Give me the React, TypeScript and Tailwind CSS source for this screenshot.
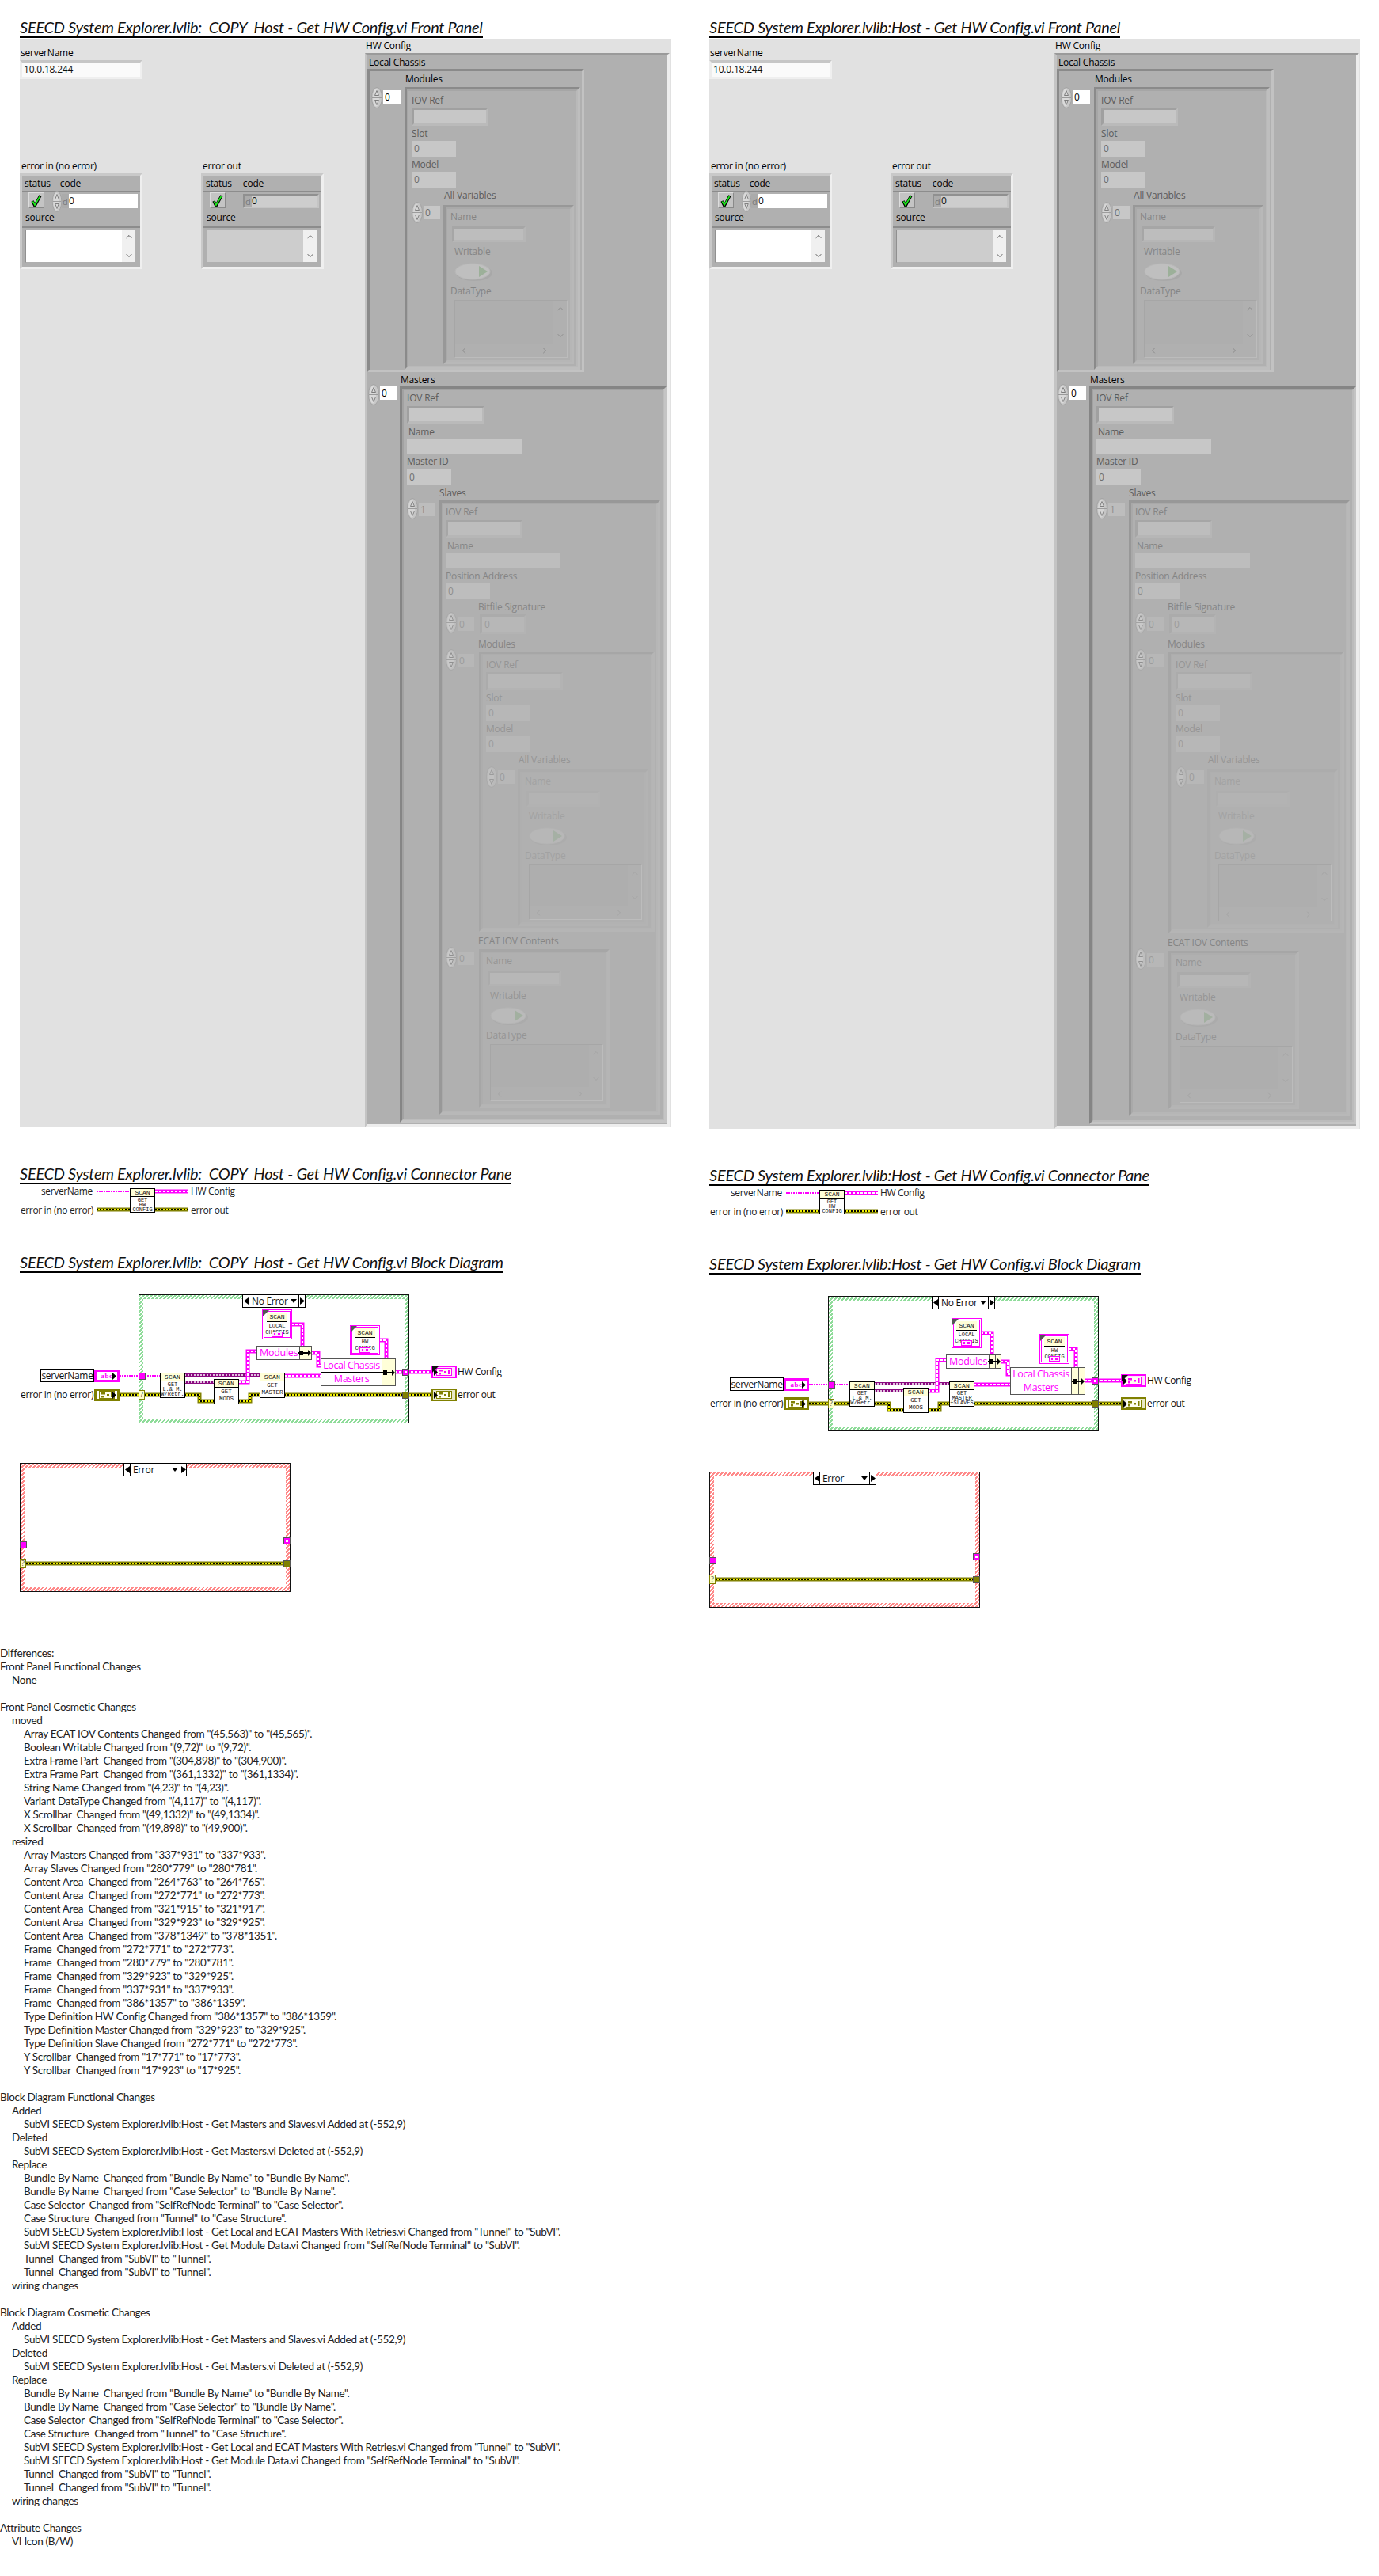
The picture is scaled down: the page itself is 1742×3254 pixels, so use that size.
import React from "react";
import { ChevronUp, ChevronDown, ChevronLeft, ChevronRight } from "lucide-react";

const TEXTC = ["text-black", "text-[#5c5c5c]", "text-[#858585]", "text-[#959595]", "text-[#a2a2a2]"];
const FIELD = ["bg-white", "bg-[#c7c7c7]", "bg-[#bdbdbd]", "bg-[#b7b7b7]", "bg-[#b3b3b3]"];
const VAL = ["text-black", "text-[#6e6e6e]", "text-[#8e8e8e]", "text-[#9c9c9c]", "text-[#a8a8a8]"];
const REC = [
  "border-2 border-t-[#8e8e8e] border-l-[#8e8e8e] border-r-[#c2c2c2] border-b-[#c2c2c2]",
  "border-[3px] border-t-[#a0a0a0] border-l-[#a0a0a0] border-r-[#bababa] border-b-[#bababa]",
  "border-[3px] border-t-[#a6a6a6] border-l-[#a6a6a6] border-r-[#b6b6b6] border-b-[#b6b6b6]",
  "border-[3px] border-t-[#ababab] border-l-[#ababab] border-r-[#b3b3b3] border-b-[#b3b3b3]",
  "border-[3px] border-t-[#aeaeae] border-l-[#aeaeae] border-r-[#b2b2b2] border-b-[#b2b2b2]",
];
const FRAME = [
  "border-[3px] border-t-[#858585] border-l-[#858585] border-r-[#c4c4c4] border-b-[#c4c4c4]",
  "border-[3px] border-t-[#8a8a8a] border-l-[#8a8a8a] border-r-[#bebebe] border-b-[#bebebe]",
  "border-[3px] border-t-[#989898] border-l-[#989898] border-r-[#b8b8b8] border-b-[#b8b8b8]",
  "border-[3px] border-t-[#a6a6a6] border-l-[#a6a6a6] border-r-[#b5b5b5] border-b-[#b5b5b5]",
  "border-[3px] border-t-[#acacac] border-l-[#acacac] border-r-[#b3b3b3] border-b-[#b3b3b3]",
];
const INNER = [
  "border-2 border-t-[#a2a2a2] border-l-[#a2a2a2] border-r-[#bcbcbc] border-b-[#bcbcbc]",
  "border-2 border-t-[#a6a6a6] border-l-[#a6a6a6] border-r-[#b9b9b9] border-b-[#b9b9b9]",
  "border-2 border-t-[#a9a9a9] border-l-[#a9a9a9] border-r-[#b6b6b6] border-b-[#b6b6b6]",
  "border-2 border-t-[#adadad] border-l-[#adadad] border-r-[#b4b4b4] border-b-[#b4b4b4]",
  "border-2 border-t-[#afafaf] border-l-[#afafaf] border-r-[#b2b2b2] border-b-[#b2b2b2]",
];
const OPA = ["opacity-100", "opacity-90", "opacity-60", "opacity-40", "opacity-30"];

function Lbl({ t, lvl = 0, c = "" }: { t: string; lvl?: number; c?: string }) {
  return <div className={`h-[16px] leading-[16px] text-[12px] tracking-[-0.2px] whitespace-pre ${TEXTC[lvl]} ${c}`}>{t}</div>;
}

function Field({ lvl, c, v, rec }: { lvl: number; c: string; v?: string; rec?: boolean }) {
  return (
    <div className={`flex items-center pl-[3px] text-[12px] leading-none ${rec ? REC[lvl] : ""} ${FIELD[lvl]} ${VAL[lvl]} ${c}`}>{v}</div>
  );
}

function Spinner({ lvl, c = "" }: { lvl: number; c?: string }) {
  return (
    <svg width="14" height="27" viewBox="0 0 14 27" className={`shrink-0 ${OPA[lvl]} ${c}`}>
      <ellipse cx="7" cy="13.5" rx="6.5" ry="13" fill="#c8c8c8" stroke="#a2a2a2" />
      <ellipse cx="6" cy="13.5" rx="4" ry="11" fill="#dadada" />
      <path d="M1 13.5H13" stroke="#9a9a9a" />
      <path d="M7 4.5L4.5 10.5H9.5Z M7 22.5L4.5 16.5H9.5Z" fill="none" stroke="#7c7c7c" />
    </svg>
  );
}

function Idx({ lvl, v = "0", c = "" }: { lvl: number; v?: string; c?: string }) {
  return <div className={`w-[21px] h-[17px] pl-[2px] flex items-center text-[12px] leading-none ${FIELD[lvl]} ${VAL[lvl]} ${c}`}>{v}</div>;
}

function Frame({ lvl, c, children }: { lvl: number; c: string; children: React.ReactNode }) {
  return (
    <div className={`shrink-0 ${FRAME[lvl]} ${c}`}>
      <div className={`h-full ${INNER[lvl]}`}>{children}</div>
    </div>
  );
}

function Oval({ lvl }: { lvl: number }) {
  return (
    <svg width="50" height="24" viewBox="0 0 50 24" className={`block ${OPA[lvl]}`}>
      <ellipse cx="25" cy="13" rx="23" ry="10" fill="#a4a4a4" />
      <ellipse cx="23" cy="11" rx="22" ry="10" fill="#c9c9c9" stroke="#bdbdbd" />
      <path d="M31 4L42 11L31 18Z" fill="#8fb08a" />
    </svg>
  );
}

function TextBox({ lvl, c, tone }: { lvl: number; c: string; tone: string }) {
  const ic = lvl < 3 ? "text-[#8c8c8c]" : "text-[#a4a4a4]";
  return (
    <div className={`${c} border border-t-[#a6a6a6] border-l-[#a6a6a6] border-r-[#bcbcbc] border-b-[#bcbcbc] flex flex-col`}>
      <div className="flex-1 flex min-h-0">
        <div className={`flex-1 ${tone}`} />
        <div className="w-[17px] flex flex-col justify-between items-center py-[4px]">
          <ChevronUp size={12} className={ic} />
          <ChevronDown size={12} className={ic} />
        </div>
      </div>
      <div className="h-[17px] flex justify-between items-center px-[5px] mr-[17px]">
        <ChevronLeft size={12} className={ic} />
        <ChevronRight size={12} className={ic} />
      </div>
    </div>
  );
}

function VarEl({ lvl, c, tb }: { lvl: number; c: string; tb: string }) {
  return (
    <Frame lvl={lvl} c={`w-[165px] ${c}`}>
      <div className="pl-[4px] pt-[2px]">
        <Lbl t="Name" lvl={lvl} />
        <Field lvl={lvl} rec c="ml-[2px] mt-[4px] w-[93px] h-[20px]" />
        <Lbl t="Writable" lvl={lvl} c="ml-[5px] mt-[4px]" />
        <div className="ml-[5px] mt-[6px]">
          <Oval lvl={lvl} />
        </div>
        <Lbl t="DataType" lvl={lvl} c="mt-[4px]" />
        <TextBox lvl={lvl} tone="bg-[#aeaeae]" c={`ml-[5px] mt-[3px] w-[143px] ${tb}`} />
      </div>
    </Frame>
  );
}

function ModuleEl({ lvl, c, varC, tb }: { lvl: number; c: string; varC: string; tb: string }) {
  return (
    <Frame lvl={lvl} c={`w-[222px] ${c}`}>
      <div className="pl-[4px] pt-[4px]">
        <Lbl t="IOV Ref" lvl={lvl} />
        <Field lvl={lvl} rec c="mt-[1px] w-[97px] h-[23px]" />
        <Lbl t="Slot" lvl={lvl} c="mt-[2px]" />
        <Field lvl={lvl} v="0" c="mt-[1px] w-[56px] h-[20px]" />
        <Lbl t="Model" lvl={lvl} c="mt-[2px]" />
        <Field lvl={lvl} v="0" c="mt-[1px] w-[56px] h-[20px]" />
        <Lbl t="All Variables" lvl={lvl} c="mt-[2px] ml-[41px]" />
        <div className="flex">
          <div className="w-[40px] flex gap-[1px] items-start">
            <Spinner lvl={lvl} />
            <Idx lvl={lvl} c="mt-[5px]" />
          </div>
          <div className="mt-[4px]">
            <VarEl lvl={Math.min(lvl + 1, 4)} c={varC} tb={tb} />
          </div>
        </div>
      </div>
    </Frame>
  );
}

function ErrorCluster({ label, ctl }: { label: string; ctl: boolean }) {
  return (
    <div className="w-[155px]">
      <Lbl t={label} c="ml-[2px]" />
      <div className="mt-[1px] h-[121px] border-[3px] border-t-[#c9c9c9] border-l-[#c9c9c9] border-r-[#efefef] border-b-[#efefef] bg-[#b0b0b0]">
        <div className="h-[19px] flex pl-[3px] pt-[2px]">
          <Lbl t="status" />
          <Lbl t={"code"} c={ctl ? "ml-[12px]" : "ml-[14px]"} />
        </div>
        <div className="h-[26px] border-t-2 border-[#8c8c8c] flex items-start pl-[8px]">
          <div className="w-[20px] h-[20px] bg-[#c4c4c4] border border-[#dcdcdc] border-r-[#8a8a8a] border-b-[#8a8a8a] flex items-center justify-center">
            <svg width="14" height="17" viewBox="0 0 14 17">
              <path d="M2 9L5 15L12 2" fill="none" stroke="#000" strokeWidth="3.6" />
              <path d="M2.4 9.5L5 14L11.5 3" fill="none" stroke="#19e819" strokeWidth="1.8" />
            </svg>
          </div>
          {ctl ? <Spinner lvl={0} c="ml-[9px] -mt-[2px] scale-x-90" /> : <div className="w-[14px] ml-[9px]" />}
          <div className={`${ctl ? "ml-[-1px] w-[96px]" : "ml-[-1px] w-[96px] border-2 border-t-[#909090] border-l-[#909090] border-r-[#c4c4c4] border-b-[#c4c4c4]"} mt-[2px] h-[18px] flex items-center bg-[#ababab]`}>
            <div className="w-[9px] text-[11px] text-[#7a7a7a] pl-[1px] leading-none">d</div>
            <div className={`flex-1 h-full flex items-center text-[12px] leading-none ${ctl ? "bg-white" : "bg-[#cdcdcd]"}`}>0</div>
          </div>
        </div>
        <div className="h-[19px] pl-[4px]">
          <Lbl t="source" />
        </div>
        <div className="border-t-2 border-[#8c8c8c] pl-[4px] pt-[2px]">
          <div className="w-[140px] h-[42px] flex border border-t-[#909090] border-l-[#909090] border-transparent">
            <div className={`flex-1 ${ctl ? "bg-white" : "bg-[#cdcdcd]"}`} />
            <div className="w-[17px] flex flex-col justify-between items-center py-[2px] bg-[#f0f0f0]">
              <ChevronUp size={12} className="text-[#505050]" />
              <ChevronDown size={12} className="text-[#505050]" />
            </div>
          </div>
        </div>
      </div>
    </div>
  );
}

function FrontPanel({ extra }: { extra: boolean }) {
  return (
    <div className={`mt-[1px] w-[822px] bg-[#e1e1e1] flex ${extra ? "h-[1377px]" : "h-[1375px]"}`}>
      <div className="w-[436px] shrink-0">
        <Lbl t="serverName" c="mt-[10px] ml-[1px]" />
        <div className="mt-[1px] w-[155px] h-[24px] border-[3px] border-t-[#c6c6c6] border-l-[#ededed] border-r-[#efefef] border-b-[#efefef] bg-[#fafafa] flex items-center pl-[2px] text-[12px] tracking-[-0.2px]">
          10.0.18.244
        </div>
        <div className="mt-[102px] flex gap-[74px]">
          <ErrorCluster label="error in (no error)" ctl />
          <ErrorCluster label="error out" ctl={false} />
        </div>
      </div>
      <div className="flex-1 flex flex-col">
        <div className="h-[18px]">
          <Lbl t="HW Config" c="ml-[1px] mt-[1px]" />
        </div>
        <div className="flex-1 w-[385px] bg-[#b0b0b0] border-[3px] border-r-[4px] border-b-[4px] border-t-[#9a9a9a] border-l-[#c4c4c4] border-r-[#ededed] border-b-[#ededed]">
          <Lbl t="Local Chassis" c="ml-[2px] mt-[1px]" />
          <div className="h-[383px] w-[274px] border-[3px] border-t-[#8a8a8a] border-l-[#8a8a8a] border-r-[#c2c2c2] border-b-[#c2c2c2]">
            <Lbl t="Modules" c="ml-[45px] mt-[2px]" />
            <div className="flex mt-[2px]">
              <div className="w-[44px] flex gap-[1px] pl-[2px] items-start">
                <Spinner lvl={0} />
                <Idx lvl={0} c="mt-[4px] w-[22px]" />
              </div>
              <ModuleEl lvl={1} c="h-[357px]" varC="h-[201px]" tb="h-[73px]" />
            </div>
          </div>
          <Lbl t="Masters" c="ml-[42px] mt-[2px]" />
          <div className="flex">
            <div className="w-[41px] flex gap-[1px] items-start -mt-[3px] pl-[1px]">
              <Spinner lvl={0} />
              <Idx lvl={0} c="mt-[3px]" />
            </div>
            <Frame lvl={0} c={`w-[337px] ${extra ? "h-[932px]" : "h-[930px]"}`}>
              <div className="pl-[4px] pt-[2px]">
                <Lbl t="IOV Ref" lvl={1} />
                <Field lvl={1} rec c="mt-[2px] w-[98px] h-[22px]" />
                <Lbl t="Name" lvl={1} c="mt-[3px] ml-[2px]" />
                <Field lvl={1} c="mt-[1px] w-[145px] h-[19px]" />
                <Lbl t="Master ID" lvl={1} c="mt-[1px]" />
                <Field lvl={1} v="0" c="mt-[2px] w-[56px] h-[20px]" />
                <Lbl t="Slaves" lvl={1} c="mt-[2px] ml-[41px]" />
                <div className="flex -mt-[2px]">
                  <div className="w-[41px] flex gap-[1px] items-start">
                    <Spinner lvl={1} />
                    <Idx lvl={2} v="1" c="mt-[6px]" />
                  </div>
                  <div className="mt-[3px]">
                    <Frame lvl={2} c={`w-[279px] ${extra ? "h-[778px]" : "h-[776px]"}`}>
                      <div className="pl-[3px] pt-[2px]">
                        <Lbl t="IOV Ref" lvl={2} />
                        <Field lvl={2} rec c="mt-[2px] w-[97px] h-[22px]" />
                        <Lbl t="Name" lvl={2} c="mt-[3px] ml-[2px]" />
                        <Field lvl={2} c="mt-[1px] w-[145px] h-[19px]" />
                        <Lbl t="Position Address" lvl={2} c="mt-[2px]" />
                        <Field lvl={2} v="0" c="mt-[1px] w-[56px] h-[20px]" />
                        <Lbl t="Bitfile Signature" lvl={2} c="mt-[2px] ml-[41px]" />
                        <div className="flex -mt-[2px]">
                          <div className="w-[43px] flex gap-[1px] items-start">
                            <Spinner lvl={2} />
                            <Idx lvl={3} c="mt-[7px]" />
                          </div>
                          <Field lvl={3} rec v="0" c="mt-[3px] w-[59px] h-[25px]" />
                        </div>
                        <Lbl t="Modules" lvl={2} c="mt-[5px] ml-[41px]" />
                        <div className="flex -mt-[2px]">
                          <div className="w-[42px] flex gap-[1px] items-start">
                            <Spinner lvl={2} />
                            <Idx lvl={3} c="mt-[6px]" />
                          </div>
                          <div className="mt-[3px]">
                            <ModuleEl lvl={3} c={extra ? "h-[356px]" : "h-[354px]"} varC={extra ? "h-[200px]" : "h-[198px]"} tb={extra ? "h-[72px]" : "h-[70px]"} />
                          </div>
                        </div>
                        <Lbl t="ECAT IOV Contents" lvl={2} c="mt-[4px] ml-[41px]" />
                        <div className="flex -mt-[1px]">
                          <div className="w-[42px] flex gap-[1px] items-start">
                            <Spinner lvl={2} />
                            <Idx lvl={3} c="mt-[6px]" />
                          </div>
                          <div className="mt-[3px]">
                            <VarEl lvl={3} c="h-[200px]" tb="h-[72px]" />
                          </div>
                        </div>
                      </div>
                    </Frame>
                  </div>
                </div>
              </div>
            </Frame>
          </div>
        </div>
      </div>
    </div>
  );
}

function Title({ t, c }: { t: string; c: string }) {
  return (
    <div className={`w-fit h-[26px] border-b-[2px] border-black leading-[25px] text-[20px] tracking-[-0.27px] italic font-['Lato',sans-serif] whitespace-pre text-[#111] ${c}`}>{t}</div>
  );
}

const WIRE = {
  pink: (d: string) => (
    <g key={d}>
      <path d={d} fill="none" stroke="#ff00ff" strokeWidth="5" />
      <path d={d} fill="none" stroke="#ffffff" strokeWidth="2" strokeDasharray="3 2" />
    </g>
  ),
  str: (d: string) => <path key={d} d={d} fill="none" stroke="#ff00ff" strokeWidth="2" strokeDasharray="2 1" />,
  purple: (d: string) => (
    <g key={d}>
      <path d={d} fill="none" stroke="#8a0a80" strokeWidth="4" />
      <path d={d} fill="none" stroke="#ffffff" strokeWidth="1.6" strokeDasharray="2 2" />
    </g>
  ),
  olive: (d: string) => (
    <g key={d}>
      <path d={d} fill="none" stroke="#808000" strokeWidth="5" />
      <path d={d} fill="none" stroke="#f2f200" strokeWidth="2" />
      <path d={d} fill="none" stroke="#000000" strokeWidth="2" strokeDasharray="2 2" />
    </g>
  ),
};

function ClusterGlyph({ color }: { color: string }) {
  return (
    <svg width="20" height="10" viewBox="0 0 20 10">
      <rect x="0.5" y="0.5" width="19" height="9" fill="#fffff0" stroke={color} />
      <rect x="3" y="2" width="5" height="2.5" fill={color} />
      <rect x="3" y="6" width="3" height="2.5" fill={color} />
      <rect x="10" y="4" width="3" height="2.5" fill={color} />
      <rect x="15" y="2" width="2.5" height="6" fill={color} />
    </svg>
  );
}

function Term({ x, y, kind, out }: { x: number; y: number; kind: "abc" | "pink" | "olive"; out?: boolean }) {
  const pink = kind !== "olive";
  const border = out
    ? pink ? "border-2 border-[#ff00ff]" : "border-2 border-[#808000]"
    : pink ? "border-[3px] border-[#ff00ff]" : "border-[3px] border-[#808000]";
  return (
    <div style={{ left: x, top: y }} className={`absolute w-[32px] h-[16px] flex items-center justify-center ${border} ${out ? (pink ? "bg-[#ffe0ff]" : "bg-[#e8e8c8]") : "bg-white"}`}>
      {kind === "abc" ? (
        <span className="text-[9px] font-bold font-['Liberation_Serif',serif] text-[#ff00ff] leading-none tracking-[0.5px]">abc</span>
      ) : (
        <ClusterGlyph color={pink ? "#ff00ff" : "#808000"} />
      )}
      <svg width="5" height="9" viewBox="0 0 5 9" className={`absolute ${out ? "left-[1px]" : "right-[1px]"}`}>
        <path d="M0 0L5 4.5L0 9Z" fill="#000" />
      </svg>
      {out && pink && (
        <svg width="8" height="8" viewBox="0 0 8 8" className="absolute -left-[1px] -top-[1px]">
          <path d="M0 0H8L0 8Z" fill="#111" />
        </svg>
      )}
    </div>
  );
}

function SubVI({ x, y, w = 32, h = 32, lines, tall }: { x: number; y: number; w?: number; h?: number; lines: string[]; tall?: boolean }) {
  return (
    <div style={{ left: x, top: y, width: w, height: h }} className="absolute bg-white border border-black font-['Liberation_Mono',monospace] text-[#111]">
      <div className="h-[10px] bg-[#ffffd8] border-b border-black text-[8px] leading-[9px] text-center tracking-[0.3px]">SCAN</div>
      <div className={`text-center flex flex-col ${tall ? "text-[7.5px] leading-[9px] pt-[1px]" : "text-[7px] leading-[6px] pt-[1px]"}`}>
        {lines.map((l, i) => (
          <div key={i} className="whitespace-pre">{l}</div>
        ))}
      </div>
    </div>
  );
}

function Const({ x, y, lines }: { x: number; y: number; lines: string[] }) {
  return (
    <div style={{ left: x, top: y }} className="absolute w-[38px] h-[38px] bg-white border border-[#ff00ff] p-[1px]">
      <div className="h-full border border-[#ff00ff] bg-white font-['Liberation_Mono',monospace] text-[#111] relative px-[2px]">
        <div className="h-[12px] mt-[1px] mx-[1px] bg-[#ffffd8] border-b border-black text-[8px] leading-[11px] text-center">SCAN</div>
        <div className="text-[7px] leading-[8px] text-center whitespace-pre pt-[1px] -mx-[2px]">{lines.join("\n")}</div>
        <div className="absolute left-[9px] bottom-[0px]">
          <svg width="14" height="7" viewBox="0 0 14 7">
            <rect x="0.5" y="0.5" width="13" height="6" fill="#ffe8ff" stroke="#ff00ff" />
            <rect x="3" y="2" width="2" height="3" fill="#ff00ff" />
            <rect x="8" y="2" width="3" height="3" fill="#ff00ff" />
          </svg>
        </div>
      </div>
      <svg width="8" height="8" viewBox="0 0 8 8" className="absolute -left-[0px] -top-[0px]">
        <path d="M0 0H8L0 8Z" fill="#555" />
      </svg>
    </div>
  );
}

function BundleCell({ x, y, h }: { x: number; y: number; h: number }) {
  return (
    <div style={{ left: x, top: y, height: h }} className="absolute w-[16px] flex items-center">
      <svg width="16" height="8" viewBox="0 0 16 8" className="relative">
        <path d="M0 3H12V0L16 4L12 8V5H0Z" fill="#000" />
        <rect x="1" y="1" width="5" height="6" fill="#000" />
      </svg>
    </div>
  );
}

function Selector({ name }: { name: string }) {
  return (
    <div className="absolute top-0 left-[131px] w-[80px] h-[17px] border border-black bg-white flex items-center text-[12px] tracking-[-0.3px] leading-none">
      <div className="w-[8px] h-full border-r border-black flex items-center justify-center shrink-0">
        <svg width="6" height="9" viewBox="0 0 6 9"><path d="M6 0L0 4.5L6 9Z" fill="#000" /></svg>
      </div>
      <div className="flex-1 flex items-center justify-between pl-[3px] pr-[2px] text-[#111] whitespace-nowrap">
        <span>{name}</span>
        <svg width="8" height="5" viewBox="0 0 8 5"><path d="M0 0H8L4 5Z" fill="#000" /></svg>
      </div>
      <div className="w-[8px] h-full border-l border-black flex items-center justify-center shrink-0">
        <svg width="6" height="9" viewBox="0 0 6 9"><path d="M0 0L6 4.5L0 9Z" fill="#000" /></svg>
      </div>
    </div>
  );
}

function Tunnel({ x, y, kind }: { x: number; y: number; kind: "pinkIn" | "pinkOut" | "q" | "olive" }) {
  if (kind === "q")
    return (
      <div style={{ left: x, top: y }} className="absolute w-[8px] h-[12px] bg-[#ffffc8] border border-[#808000] text-[9px] leading-[10px] text-center text-[#555]">?</div>
    );
  if (kind === "olive")
    return <div style={{ left: x, top: y }} className="absolute w-[9px] h-[9px] bg-[#808000] border border-[#555]" />;
  return (
    <div style={{ left: x, top: y }} className="absolute w-[9px] h-[9px] bg-[#ff00ff] border border-[#555] flex items-center justify-center">
      {kind === "pinkOut" && <div className="w-[3px] h-[3px] bg-white" />}
    </div>
  );
}

function Diagram({ right }: { right: boolean }) {
  const d = right ? 9 : 0;
  const X = (x: number) => x - 25;
  const Y = (y: number) => y - 1635 + d;
  const pink = ["M301 1746H313V1707H324", "M368 1673H382V1700", "M393 1709H402V1725H405", "M479 1693H488V1716", "M359 1738H405", "M499 1733H545"];
  const olive = ["M151 1762H202", "M233 1762H252V1770H270", "M301 1770H316V1762H328", "M359 1762H545"];
  const lbl = "absolute text-[12px] tracking-[-0.35px] leading-[16px] whitespace-pre text-[#111]";
  return (
    <div className={`relative mt-[27px] w-[600px] ${right ? "h-[171px]" : "h-[163px]"}`}>
      <div className="absolute left-[150px] top-0 w-[342px] h-full border border-[#111] p-[5px] bg-[repeating-linear-gradient(135deg,#8fdc9a_0,#8fdc9a_2px,#ffffff_2px,#ffffff_3.5px)]">
        <div className="w-full h-full bg-white" />
      </div>
      <div className="absolute left-[150px] top-0 w-[342px]">
        <Selector name="No Error" />
      </div>
      <svg className="absolute inset-0 w-full h-full overflow-visible">
        <g transform={`translate(-25 ${d - 1635})`}>
          {WIRE.str("M151 1738H175")}
          {WIRE.str("M183 1738H202")}
          {WIRE.purple("M233 1737H328")}
          {WIRE.purple("M233 1746H270")}
          {pink.map((p) => WIRE.pink(p))}
          {olive.map((p) => WIRE.olive(p))}
        </g>
      </svg>
      <div style={{ left: X(51), top: Y(1729) }} className={`${lbl} w-[68px] h-[17px] border border-black bg-white text-center leading-[15px]`}>serverName</div>
      <Term x={X(119)} y={Y(1730)} kind="abc" />
      <div style={{ left: X(26), top: Y(1754) }} className={lbl}>error in (no error)</div>
      <Term x={X(119)} y={Y(1754)} kind="olive" />
      <Tunnel x={X(175)} y={Y(1734)} kind="pinkIn" />
      <Tunnel x={X(175)} y={Y(1756)} kind="q" />
      <Tunnel x={X(508)} y={Y(1729)} kind="pinkOut" />
      <Tunnel x={X(508)} y={Y(1758)} kind="olive" />
      <SubVI x={X(202)} y={Y(1734)} lines={["GET", "L.& M.", "W/Retr."]} />
      <SubVI x={X(270)} y={Y(1742)} lines={["GET", "MODS"]} tall />
      {right ? (
        <SubVI x={X(328)} y={Y(1734)} lines={["GET", "MASTER", "+SLAVES"]} />
      ) : (
        <SubVI x={X(328)} y={Y(1734)} lines={["GET", "MASTER"]} tall />
      )}
      <Const x={X(331)} y={Y(1654)} lines={["LOCAL", "CHASSIS"]} />
      <Const x={X(442)} y={Y(1674)} lines={["HW", "CONFIG"]} />
      <div style={{ left: X(324), top: Y(1700) }} className="absolute w-[70px] h-[18px] bg-white border border-[#555] flex">
        <div className="w-[53px] text-[12.5px] tracking-[-0.3px] leading-[16px] text-[#ff00ff] pl-[3px]">Modules</div>
        <div className="flex-1 flex bg-[#ffffd8]">
          <div className="flex-1 border-l border-[#555]" />
          <div className="flex-1 border-l border-[#555]" />
        </div>
      </div>
      <BundleCell x={X(377)} y={Y(1700)} h={18} />
      <div style={{ left: X(405), top: Y(1716) }} className="absolute w-[95px] h-[35px] bg-white border border-[#555] flex">
        <div className="w-[76px] flex flex-col">
          <div className="flex-1 border-b border-black text-[12.5px] tracking-[-0.4px] leading-[16px] text-[#ff00ff] text-center whitespace-pre">Local Chassis</div>
          <div className="flex-1 text-[12.5px] tracking-[-0.3px] leading-[16px] text-[#ff00ff] text-center">Masters</div>
        </div>
        <div className="flex-1 flex bg-[#ffffd8]">
          <div className="flex-1 border-l border-[#555]" />
          <div className="flex-1 border-l border-[#555]" />
        </div>
      </div>
      <BundleCell x={X(483)} y={Y(1725)} h={18} />
      <Term x={X(545)} y={Y(1725)} kind="pink" out />
      <div style={{ left: X(578), top: Y(1725) }} className={lbl}>HW Config</div>
      <Term x={X(545)} y={Y(1754)} kind="olive" out />
      <div style={{ left: X(578), top: Y(1754) }} className={lbl}>error out</div>
    </div>
  );
}

function ErrorCase({ right }: { right: boolean }) {
  const d = right ? 9 : 0;
  return (
    <div className={`relative w-[342px] ${right ? "mt-[51px] h-[172px]" : "mt-[50px] h-[163px]"}`}>
      <div className="h-full border border-[#111] p-[5px] bg-[repeating-linear-gradient(135deg,#ff8a8a_0,#ff8a8a_2px,#ffffff_2px,#ffffff_3.5px)]">
        <div className="w-full h-full bg-white" />
      </div>
      <Selector name="Error" />
      <svg className="absolute inset-0 w-full h-full overflow-visible">
        {WIRE.olive(`M8 ${127 + d}H333`)}
      </svg>
      <Tunnel x={0} y={99 + d} kind="pinkIn" />
      <Tunnel x={333} y={94 + d} kind="pinkOut" />
      <Tunnel x={0} y={121 + d} kind="q" />
      <Tunnel x={333} y={123 + d} kind="olive" />
    </div>
  );
}

function Connector() {
  const lbl = "absolute text-[12px] tracking-[-0.35px] leading-[16px] whitespace-pre text-[#222]";
  return (
    <div className="relative mt-[5px] h-[31px] w-[300px]">
      <div className={`${lbl} right-[208px] top-[-4px]`}>serverName</div>
      <div className={`${lbl} right-[207px] top-[20px]`}>error in (no error)</div>
      <svg className="absolute inset-0 w-full h-full overflow-visible">
        <g transform="translate(-25 -1501)">
          {WIRE.str("M122 1505H164")}
          {WIRE.pink("M196 1505H238")}
          {WIRE.olive("M122 1528H164")}
          {WIRE.olive("M196 1528H238")}
        </g>
      </svg>
      <div className="absolute left-[139px] top-0 w-[32px] h-[31px] bg-white border border-black font-['Liberation_Mono',monospace] text-[#111]">
        <div className="h-[10px] bg-[#ffffd8] border-b border-black text-[8px] leading-[9px] text-center">SCAN</div>
        <div className="text-[7px] leading-[6px] text-center pt-[1px]">
          <div>GET</div>
          <div>HW</div>
          <div>CONFIG</div>
        </div>
      </div>
      <div className={`${lbl} left-[216px] top-[-4px]`}>HW Config</div>
      <div className={`${lbl} left-[216px] top-[20px]`}>error out</div>
    </div>
  );
}

function Column({ name, right }: { name: string; right: boolean }) {
  return (
    <div className="w-[871px] pl-[25px] shrink-0">
      <Title t={`SEECD System Explorer.lvlib:${name} Front Panel`} c="mt-[22px]" />
      <FrontPanel extra={right} />
      <Title t={`SEECD System Explorer.lvlib:${name} Connector Pane`} c="mt-[46px]" />
      <Connector />
      <Title t={`SEECD System Explorer.lvlib:${name} Block Diagram`} c="mt-[50px]" />
      <Diagram right={right} />
      <ErrorCase right={right} />
    </div>
  );
}

const blockChanges: [number, string][] = [
  [1, "Added"],
  [2, "SubVI SEECD System Explorer.lvlib:Host - Get Masters and Slaves.vi Added at (-552,9)"],
  [1, "Deleted"],
  [2, "SubVI SEECD System Explorer.lvlib:Host - Get Masters.vi Deleted at (-552,9)"],
  [1, "Replace"],
  [2, 'Bundle By Name  Changed from "Bundle By Name" to "Bundle By Name".'],
  [2, 'Bundle By Name  Changed from "Case Selector" to "Bundle By Name".'],
  [2, 'Case Selector  Changed from "SelfRefNode Terminal" to "Case Selector".'],
  [2, 'Case Structure  Changed from "Tunnel" to "Case Structure".'],
  [2, 'SubVI SEECD System Explorer.lvlib:Host - Get Local and ECAT Masters With Retries.vi Changed from "Tunnel" to "SubVI".'],
  [2, 'SubVI SEECD System Explorer.lvlib:Host - Get Module Data.vi Changed from "SelfRefNode Terminal" to "SubVI".'],
  [2, 'Tunnel  Changed from "SubVI" to "Tunnel".'],
  [2, 'Tunnel  Changed from "SubVI" to "Tunnel".'],
  [1, "wiring changes"],
];

const LINES: [number, string][] = [
  [0, "Differences:"],
  [0, "Front Panel Functional Changes"],
  [1, "None"],
  [0, ""],
  [0, "Front Panel Cosmetic Changes"],
  [1, "moved"],
  [2, 'Array ECAT IOV Contents Changed from "(45,563)" to "(45,565)".'],
  [2, 'Boolean Writable Changed from "(9,72)" to "(9,72)".'],
  [2, 'Extra Frame Part  Changed from "(304,898)" to "(304,900)".'],
  [2, 'Extra Frame Part  Changed from "(361,1332)" to "(361,1334)".'],
  [2, 'String Name Changed from "(4,23)" to "(4,23)".'],
  [2, 'Variant DataType Changed from "(4,117)" to "(4,117)".'],
  [2, 'X Scrollbar  Changed from "(49,1332)" to "(49,1334)".'],
  [2, 'X Scrollbar  Changed from "(49,898)" to "(49,900)".'],
  [1, "resized"],
  [2, 'Array Masters Changed from "337*931" to "337*933".'],
  [2, 'Array Slaves Changed from "280*779" to "280*781".'],
  [2, 'Content Area  Changed from "264*763" to "264*765".'],
  [2, 'Content Area  Changed from "272*771" to "272*773".'],
  [2, 'Content Area  Changed from "321*915" to "321*917".'],
  [2, 'Content Area  Changed from "329*923" to "329*925".'],
  [2, 'Content Area  Changed from "378*1349" to "378*1351".'],
  [2, 'Frame  Changed from "272*771" to "272*773".'],
  [2, 'Frame  Changed from "280*779" to "280*781".'],
  [2, 'Frame  Changed from "329*923" to "329*925".'],
  [2, 'Frame  Changed from "337*931" to "337*933".'],
  [2, 'Frame  Changed from "386*1357" to "386*1359".'],
  [2, 'Type Definition HW Config Changed from "386*1357" to "386*1359".'],
  [2, 'Type Definition Master Changed from "329*923" to "329*925".'],
  [2, 'Type Definition Slave Changed from "272*771" to "272*773".'],
  [2, 'Y Scrollbar  Changed from "17*771" to "17*773".'],
  [2, 'Y Scrollbar  Changed from "17*923" to "17*925".'],
  [0, ""],
  [0, "Block Diagram Functional Changes"],
  ...blockChanges,
  [0, ""],
  [0, "Block Diagram Cosmetic Changes"],
  ...blockChanges,
  [0, ""],
  [0, "Attribute Changes"],
  [1, "VI Icon (B/W)"],
];

const INDENT = ["pl-0", "pl-[15px]", "pl-[30px]"];

export default function App() {
  return (
    <div className="w-[1742px] h-[3254px] bg-white overflow-hidden font-['Open_Sans',sans-serif] text-[#111]">
      <div className="flex h-[2080px]">
        <Column name="  COPY  Host - Get HW Config.vi" right={false} />
        <Column name="Host - Get HW Config.vi" right />
      </div>
      <div className="font-['Lato',sans-serif] text-[13.5px] tracking-[-0.3px] leading-[17px] text-[#222]">
        {LINES.map(([lvl, t], i) => (
          <div key={i} className={`h-[17px] whitespace-pre ${INDENT[lvl]}`}>{t}</div>
        ))}
      </div>
    </div>
  );
}
